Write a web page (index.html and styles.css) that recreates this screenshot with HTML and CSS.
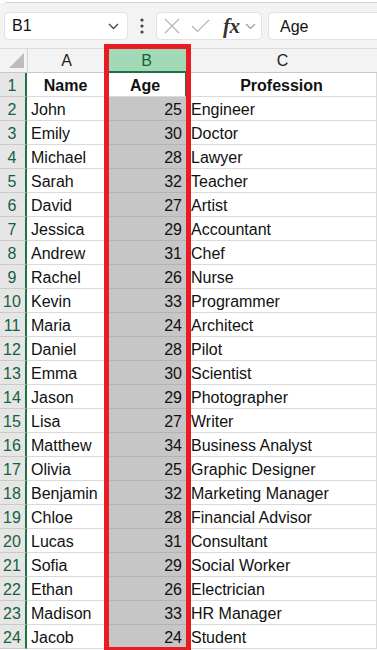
FILE: index.html
```html
<!DOCTYPE html>
<html lang="en">
<head>
    <meta charset="UTF-8">
    <meta name="viewport" content="width=device-width, initial-scale=1.0">
    <title>Sheet - Age column</title>
    <link rel="stylesheet" href="styles.css">
</head>
<body>

<div class="ribbon-edge"></div>

<div class="toolbar">
    <div class="namebox">
        <span>B1</span>
        <svg class="chev" width="11" height="7" viewBox="0 0 11 7"><path d="M1 1 L5.5 5.5 L10 1" fill="none" stroke="#444" stroke-width="1.3"/></svg>
    </div>
    <div class="dots">
        <svg width="4" height="16" viewBox="0 0 4 16"><circle cx="2" cy="2" r="1.6" fill="#444"/><circle cx="2" cy="8" r="1.6" fill="#444"/><circle cx="2" cy="14" r="1.6" fill="#444"/></svg>
    </div>
    <div class="fxbox">
        <svg class="ico-x" width="16" height="16" viewBox="0 0 16 16"><path d="M1 1 L15 15 M15 1 L1 15" stroke="#b5b5b5" stroke-width="1.2"/></svg>
        <svg class="ico-ok" width="19" height="14" viewBox="0 0 19 14"><path d="M1 7 L6.5 12.5 L18 1" fill="none" stroke="#b5b5b5" stroke-width="1.2"/></svg>
        <span class="fx">fx</span>
        <svg class="chev-sm" width="11" height="7" viewBox="0 0 11 7"><path d="M1 1 L5.5 5.5 L10 1" fill="none" stroke="#9a9a9a" stroke-width="1.2"/></svg>
    </div>
    <div class="formula">Age</div>
</div>

<div class="sheet" id="sheet">
    <div class="corner"><span class="tri"></span></div>
    <div class="colhead">A</div>
    <div class="colhead sel">B</div>
    <div class="colhead">C</div>
</div>

<div class="selection-outline"></div>

<script>
    let people = [
        ["John", 25, "Engineer"],
        ["Emily", 30, "Doctor"],
        ["Michael", 28, "Lawyer"],
        ["Sarah", 32, "Teacher"],
        ["David", 27, "Artist"],
        ["Jessica", 29, "Accountant"],
        ["Andrew", 31, "Chef"],
        ["Rachel", 26, "Nurse"],
        ["Kevin", 33, "Programmer"],
        ["Maria", 24, "Architect"],
        ["Daniel", 28, "Pilot"],
        ["Emma", 30, "Scientist"],
        ["Jason", 29, "Photographer"],
        ["Lisa", 27, "Writer"],
        ["Matthew", 34, "Business Analyst"],
        ["Olivia", 25, "Graphic Designer"],
        ["Benjamin", 32, "Marketing Manager"],
        ["Chloe", 28, "Financial Advisor"],
        ["Lucas", 31, "Consultant"],
        ["Sofia", 29, "Social Worker"],
        ["Ethan", 26, "Electrician"],
        ["Madison", 33, "HR Manager"],
        ["Jacob", 24, "Student"]
    ];

    let sheet = document.getElementById("sheet");
    let html = `<div class="rowhead">1</div>
        <div class="cell head">Name</div>
        <div class="cell head num-col active">Age</div>
        <div class="cell head">Profession</div>`;

    people.forEach((p, i) => {
        html += `<div class="rowhead">${i + 2}</div>
            <div class="cell">${p[0]}</div>
            <div class="cell num-col">${p[1]}</div>
            <div class="cell">${p[2]}</div>`;
    });

    sheet.innerHTML += html;
</script>

</body>
</html>
```

FILE: styles.css
```css
body {
    margin: 0;
    padding: 0;
    height: 650px;
    overflow: hidden;
    background-color: #fff;
    color: #111;
    font-family: "Liberation Sans", Arial, sans-serif;
    font-size: 16px;
    position: relative;
}
.ribbon-edge {
    height: 2px;
    margin-left: 4px;
    background-color: #fff;
    border-bottom: 1px solid #d3d3d3;
    border-bottom-left-radius: 4px;
}
.toolbar {
    display: flex;
    align-items: center;
    height: 45px;
    padding: 0 0 0 4px;
    background-color: #f3f3f3;
    box-sizing: border-box;
    padding-top: 6px;
    padding-bottom: 5px;
}
.namebox {
    width: 124px;
    height: 28px;
    box-sizing: border-box;
    background: #fff;
    border: 1px solid #e2e2e2;
    border-radius: 5px;
    display: flex;
    align-items: center;
    justify-content: space-between;
    padding: 0 8px 0 7px;
    font-size: 16px;
}
.dots {
    width: 28px;
    display: flex;
    justify-content: center;
    align-items: center;
}
.fxbox {
    width: 106px;
    height: 28px;
    box-sizing: border-box;
    background: #fff;
    border: 1px solid #e2e2e2;
    border-radius: 5px;
    display: flex;
    align-items: center;
    padding-left: 7px;
}
.ico-ok {
    margin-left: 11px;
}
.fx {
    font-family: "Liberation Serif", "Times New Roman", serif;
    font-style: italic;
    font-weight: bold;
    font-size: 21px;
    color: #333;
    margin-left: 13px;
    letter-spacing: -0.5px;
}
.chev-sm {
    margin-left: 5px;
}
.formula {
    flex: 1;
    height: 28px;
    box-sizing: border-box;
    margin-left: 6px;
    margin-right: -8px;
    background: #fff;
    border: 1px solid #e2e2e2;
    border-radius: 5px;
    padding-left: 11px;
    line-height: 27px;
    font-size: 16px;
}

/* grid */
.sheet {
    display: grid;
    grid-template-columns: 27px 78px 82px 1fr;
    grid-auto-rows: 24px;
    grid-template-rows: 25px;
    background: #fff;
}
.corner {
    background: #f3f3f3;
    border-bottom: 1px solid #c8c8c8;
    border-top: 1px solid #dcdcdc;
    position: relative;
}
.tri {
    position: absolute;
    right: 3px;
    bottom: 4px;
    width: 0;
    height: 0;
    border-left: 15px solid transparent;
    border-bottom: 15px solid #bdbdbd;
}
.colhead {
    background: #f3f3f3;
    border-top: 1px solid #dcdcdc;
    border-bottom: 1px solid #c8c8c8;
    border-left: 1px solid #d4d4d4;
    text-align: center;
    line-height: 24px;
    color: #222;
}
.colhead.sel {
    background: #a3d9b7;
    color: #14643a;
    border-bottom: 2px solid #1f7246;
}
.rowhead {
    background: #e6e6e6;
    border-right: 2px solid #1f7246;
    border-bottom: 1px solid #cacaca;
    text-align: center;
    line-height: 25px;
    color: #17603c;
    box-sizing: border-box;
    padding-right: 1px;
    overflow: hidden;
}
.cell {
    border-bottom: 1px solid #dadada;
    border-right: 1px solid #dadada;
    padding: 1px 4px 0;
    line-height: 23px;
    white-space: nowrap;
    overflow: hidden;
}
.cell.head {
    font-weight: bold;
    text-align: center;
}
.num-col {
    background: #c6c6c6;
    text-align: right;
    border-right: 1px solid #1f7246;
    border-bottom-color: #b4b4b4;
}
.num-col.active {
    background: #fff;
    text-align: center;
    border-right: 2px solid #1f7246;
    border-bottom-color: #dadada;
}

/* red highlight drawn over the column */
.selection-outline {
    position: absolute;
    left: 104px;
    top: 44px;
    width: 87px;
    height: 608px;
    border: 5px solid #e81c24;
    box-sizing: border-box;
    pointer-events: none;
}
```
